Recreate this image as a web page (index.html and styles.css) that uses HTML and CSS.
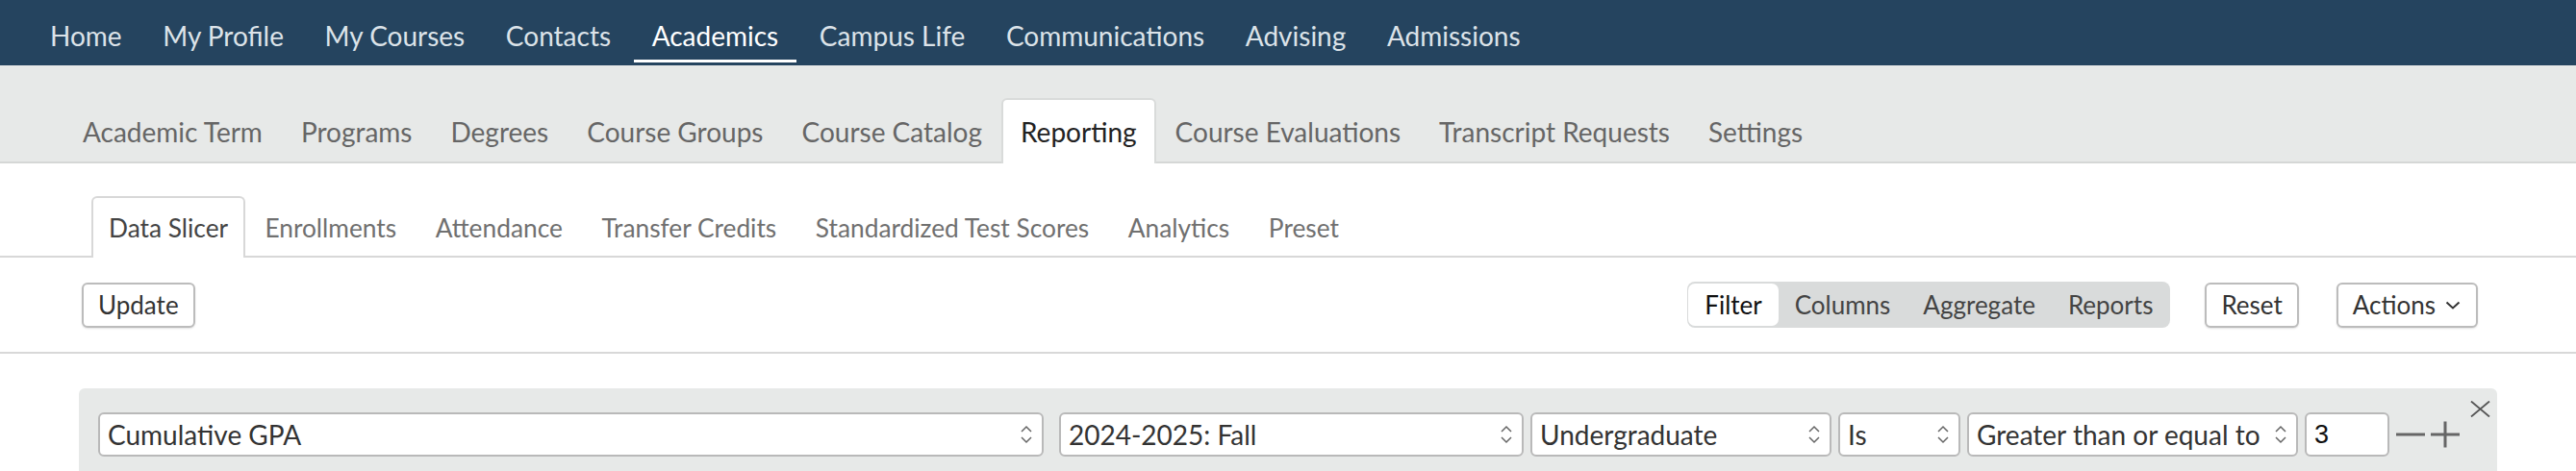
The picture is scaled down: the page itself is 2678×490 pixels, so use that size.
FILE: index.html
```html
<!DOCTYPE html>
<html lang="en">
<head>
<meta charset="utf-8">
<title>Reporting - Data Slicer</title>
<link rel="stylesheet" href="styles.css">
</head>
<body>
<nav class="topnav">
  <a class="nav-item">Home</a>
  <a class="nav-item">My Profile</a>
  <a class="nav-item">My Courses</a>
  <a class="nav-item">Contacts</a>
  <a class="nav-item active">Academics</a>
  <a class="nav-item">Campus Life</a>
  <a class="nav-item">Communications</a>
  <a class="nav-item">Advising</a>
  <a class="nav-item">Admissions</a>
</nav>
<div class="subnav">
  <a class="tab">Academic Term</a>
  <a class="tab">Programs</a>
  <a class="tab">Degrees</a>
  <a class="tab">Course Groups</a>
  <a class="tab">Course Catalog</a>
  <a class="tab active">Reporting</a>
  <a class="tab">Course Evaluations</a>
  <a class="tab">Transcript Requests</a>
  <a class="tab">Settings</a>
</div>
<div class="subtabs">
  <a class="stab active">Data Slicer</a>
  <a class="stab">Enrollments</a>
  <a class="stab">Attendance</a>
  <a class="stab">Transfer Credits</a>
  <a class="stab">Standardized Test Scores</a>
  <a class="stab">Analytics</a>
  <a class="stab">Preset</a>
</div>
<div class="toolbar">
  <button class="btn">Update</button>
  <div class="spacer"></div>
  <div class="seg">
    <span class="seg-item active">Filter</span>
    <span class="seg-item">Columns</span>
    <span class="seg-item">Aggregate</span>
    <span class="seg-item">Reports</span>
  </div>
  <button class="btn reset">Reset</button>
  <button class="btn actions">Actions
    <svg class="chev" width="16" height="9" viewBox="0 0 16 9"><path d="M1.5 1.5 L8 7.5 L14.5 1.5" fill="none" stroke="#333" stroke-width="2"/></svg>
  </button>
</div>
<div class="filter-box">
  <div class="filter-row">
    <div class="select w-field"><span>Cumulative GPA</span><svg class="updown" width="14" height="24" viewBox="0 0 14 24"><path d="M2 9 L7 4 L12 9 M2 15 L7 20 L12 15" fill="none" stroke="#666" stroke-width="1.5"/></svg></div>
    <div class="select w-term"><span>2024-2025: Fall</span><svg class="updown" width="14" height="24" viewBox="0 0 14 24"><path d="M2 9 L7 4 L12 9 M2 15 L7 20 L12 15" fill="none" stroke="#666" stroke-width="1.5"/></svg></div>
    <div class="select w-level"><span>Undergraduate</span><svg class="updown" width="14" height="24" viewBox="0 0 14 24"><path d="M2 9 L7 4 L12 9 M2 15 L7 20 L12 15" fill="none" stroke="#666" stroke-width="1.5"/></svg></div>
    <div class="select w-is"><span>Is</span><svg class="updown" width="14" height="24" viewBox="0 0 14 24"><path d="M2 9 L7 4 L12 9 M2 15 L7 20 L12 15" fill="none" stroke="#666" stroke-width="1.5"/></svg></div>
    <div class="select w-op"><span>Greater than or equal to</span><svg class="updown" width="14" height="24" viewBox="0 0 14 24"><path d="M2 9 L7 4 L12 9 M2 15 L7 20 L12 15" fill="none" stroke="#666" stroke-width="1.5"/></svg></div>
    <div class="input">3</div>
    <svg class="minus" width="30" height="30" viewBox="0 0 30 30"><path d="M0 15 H30" stroke="#666" stroke-width="3"/></svg>
    <svg class="plus" width="30" height="30" viewBox="0 0 30 30"><path d="M0 15 H30 M15 1.5 V28.5" stroke="#666" stroke-width="3"/></svg>
  </div>
  <svg class="close" width="21" height="17" viewBox="0 0 21 17"><path d="M1 0.5 L20 16.5 M20 0.5 L1 16.5" stroke="#555" stroke-width="1.8"/></svg>
</div>
</body>
</html>
```
FILE: styles.css
```css
* { box-sizing: border-box; }
body {
  margin: 0;
  font-family: Lato, "Open Sans", sans-serif;
  background: #fff;
  color: #333;
}
a { text-decoration: none; cursor: pointer; }

/* top navigation */
.topnav {
  height: 68px;
  background: #25445f;
  display: flex;
  align-items: flex-start;
  padding-left: 33px;
  gap: 4.6px;
}
.nav-item {
  font-size: 28px;
  color: #dce3e9;
  padding: 12px 19px 0;
  line-height: 50px;
  border-bottom: 3px solid transparent;
}
.nav-item.active {
  color: #fff;
  border-bottom-color: #fff;
}

/* second level */
.subnav {
  height: 102px;
  background: #e7e9e8;
  border-bottom: 2px solid #d5d7d6;
  display: flex;
  align-items: flex-end;
  padding-left: 66px;
}
.tab {
  font-size: 28px;
  color: #666;
  height: 68px;
  line-height: 66px;
  padding: 0 18px;
  border: 2px solid transparent;
  border-bottom: 0;
  margin-bottom: -2px;
  border-radius: 6px 6px 0 0;
}
.tab.active {
  background: #fff;
  color: #222;
  border-color: #d9dbda;
}

/* third level */
.subtabs {
  height: 98px;
  border-bottom: 2px solid #d8d8d8;
  display: flex;
  align-items: flex-end;
  padding-left: 95px;
}
.stab {
  font-size: 26.3px;
  color: #707070;
  height: 64px;
  line-height: 62px;
  padding: 0 18.3px;
  border: 2px solid transparent;
  border-bottom: 0;
  margin-bottom: -2px;
  border-radius: 6px 6px 0 0;
}
.stab.active {
  color: #444;
  background: #fff;
  border-color: #d8d8d8;
  padding: 0 16px;
}

/* toolbar */
.toolbar {
  height: 100px;
  border-bottom: 2px solid #d8d8d8;
  display: flex;
  align-items: center;
  padding: 0 102px 0 85px;
}
.spacer { flex: 1; }
.btn {
  font-family: inherit;
  font-size: 26px;
  color: #333;
  background: #fff;
  height: 47px;
  line-height: 43px;
  padding: 0 15px;
  border: 2px solid #bcbcbc;
  border-radius: 6px;
  box-shadow: 0 1px 2px rgba(0,0,0,0.12);
  display: flex;
  align-items: center;
}
.reset { margin-left: 36px; }
.actions { margin-left: 39px; gap: 10px; padding-right: 16px; }
.seg {
  display: flex;
  background: #d9dbdb;
  border-radius: 8px;
  padding: 2px 1px;
  height: 48px;
}
.seg-item {
  font-size: 26px;
  color: #444;
  padding: 0 17px;
  line-height: 44px;
  border-radius: 7px;
}
.seg-item.active {
  background: #fff;
  color: #111;
}

/* filter box */
.filter-box {
  position: relative;
  margin: 36px 82px 0;
  background: #e7e9e8;
  border-radius: 6px 6px 0 0;
  padding: 25px 20px 30px;
}
.filter-row {
  display: flex;
  align-items: center;
}
.select, .input {
  height: 46px;
  background: #fff;
  border: 2px solid #b9b9b9;
  border-radius: 6px;
  font-size: 28px;
  line-height: 42px;
  color: #333;
  padding: 0 8px;
  display: flex;
  align-items: center;
  justify-content: space-between;
  margin-right: 7px;
  white-space: nowrap;
}
.select .updown { flex: none; margin-right: 1px; }
.w-field { width: 983px; margin-right: 16px; }
.w-term { width: 483px; }
.w-level { width: 313px; }
.w-is { width: 127px; }
.w-op { width: 344px; }
.input {
  width: 88px;
  color: #111;
  font-family: "Liberation Sans", Arial, sans-serif;
  font-size: 27px;
}
.minus { flex: none; margin-right: 6px; }
.plus { flex: none; }
.close {
  position: absolute;
  top: 13px;
  right: 7px;
}
```
